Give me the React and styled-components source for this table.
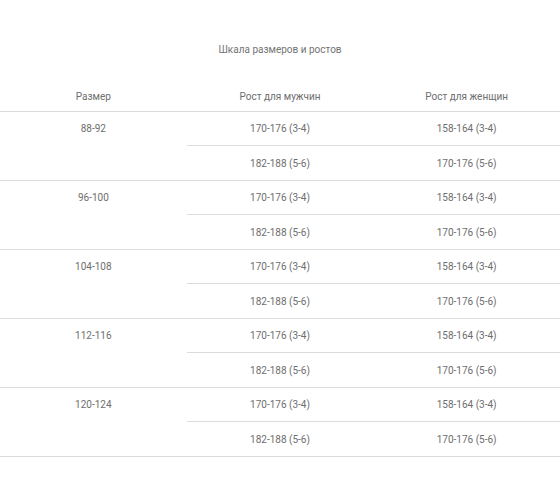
import React from 'react';
import styled, { createGlobalStyle } from 'styled-components';

const GlobalStyle = createGlobalStyle`
  body {
    margin: 0;
    background: #fff;
    font-family: Roboto, "Liberation Sans", sans-serif;
  }
`;

const Wrapper = styled.div`
  width: 560px;
  padding-top: 42px;
`;

const Title = styled.div`
  text-align: center;
  font-size: 10px;
  line-height: 16px;
  color: #747474;
  margin-bottom: 23px;
`;

const Table = styled.table`
  width: 100%;
  border-collapse: collapse;
  table-layout: fixed;
  font-size: 10px;
  color: #6e6e6e;
`;

const HeadCell = styled.th`
  font-weight: 400;
  height: 30px;
  padding: 0;
  vertical-align: middle;
  text-align: center;
  border-bottom: 1px solid #dcdcdc;
`;

const Cell = styled.td`
  height: ${p => (p.$first ? '33px' : '34px')};
  padding: 0;
  text-align: center;
  vertical-align: middle;
  border-bottom: 1px solid #dcdcdc;
`;

const SizeCell = styled.td`
  padding: 11px 0 0;
  text-align: center;
  vertical-align: top;
  border-bottom: 1px solid #dcdcdc;
`;

const rows = ['88-92', '96-100', '104-108', '112-116', '120-124'];

export default function App() {
  return (
    <Wrapper>
      <GlobalStyle />
      <Title>Шкала размеров и ростов</Title>
      <Table>
        <thead>
          <tr>
            <HeadCell>Размер</HeadCell>
            <HeadCell>Рост для мужчин</HeadCell>
            <HeadCell>Рост для женщин</HeadCell>
          </tr>
        </thead>
        <tbody>
          {rows.map(size => (
            <React.Fragment key={size}>
              <tr>
                <SizeCell rowSpan={2}>{size}</SizeCell>
                <Cell $first>170-176 (3-4)</Cell>
                <Cell $first>158-164 (3-4)</Cell>
              </tr>
              <tr>
                <Cell>182-188 (5-6)</Cell>
                <Cell>170-176 (5-6)</Cell>
              </tr>
            </React.Fragment>
          ))}
        </tbody>
      </Table>
    </Wrapper>
  );
}
